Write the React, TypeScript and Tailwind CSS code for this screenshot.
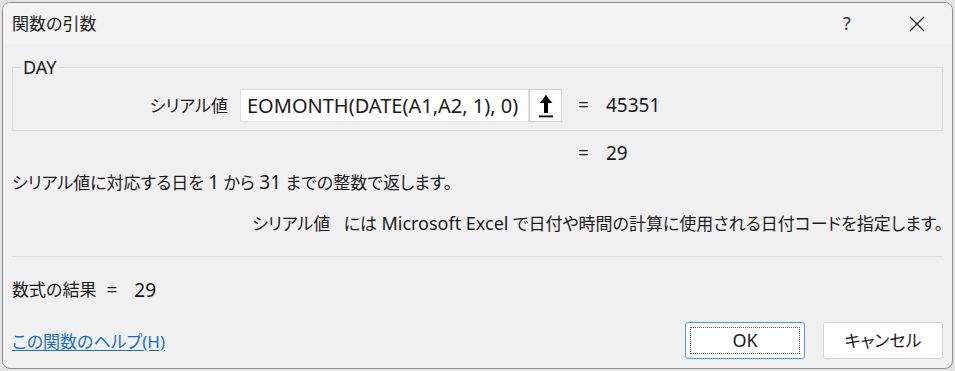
import React from 'react';

const font = "font-['Noto_Sans','Noto_Sans_CJK_JP',sans-serif] [font-feature-settings:'palt']";

function UploadArrow() {
  return (
    <svg width="16" height="24" viewBox="0 0 16 24" className="text-black">
      <path
        d="M8 0.5 Q10 4.5 14.5 9 L10 9 L10 19 L6 19 L6 9 L1.5 9 Q6 4.5 8 0.5 Z"
        fill="currentColor"
      />
      <rect x="1" y="21.5" width="14" height="1.8" fill="currentColor" />
    </svg>
  );
}

export default function App() {
  return (
    <div className={`w-[955px] h-[371px] bg-[#e4e4e4] p-[2px] ${font} text-[#1b1b1b]`}>
      <div className="w-[951px] h-[367px] rounded-[8px] border border-[#8e8e8e] bg-[#f0f0f0] overflow-hidden flex flex-col">
        {/* title bar */}
        <div className="h-[41px] bg-[#f3f3f3] flex items-center justify-between pl-[9px]">
          <span className="text-[17px] leading-[24px]">関数の引数</span>
          <div className="flex h-full">
            <div className="w-[70px] h-full flex items-center justify-center text-[18px] text-[#333]">?</div>
            <div className="w-[70px] h-full flex items-center justify-center">
              <svg width="16" height="16" viewBox="0 0 16 16">
                <path d="M1 1 L15 15 M15 1 L1 15" stroke="#1b1b1b" strokeWidth="1.3" />
              </svg>
            </div>
          </div>
        </div>

        {/* body */}
        <div className="flex flex-col px-[9px]">
          <fieldset className="mt-[13px] border border-[#dcdcdc] pb-[8px] pt-[12px]">
            <legend className="ml-[8px] px-[2px] text-[18px] leading-[20px]">DAY</legend>
            <div className="flex items-center">
              <span className="w-[215px] text-right text-[17px]">シリアル値</span>
              <div className="ml-[12px] flex h-[33px]">
                <div className="w-[289px] h-[33px] bg-white border border-[#e1e1e1] pl-[6px] flex items-center text-[20px] whitespace-pre">
                  EOMONTH(DATE(A1,A2, 1), 0)
                </div>
                <div className="w-[33px] h-[33px] bg-white border border-[#cfcfcf] flex items-center justify-center">
                  <UploadArrow />
                </div>
              </div>
              <span className="ml-[16px] w-[28px] text-[19px]">=</span>
              <span className="text-[19px]">45351</span>
            </div>
          </fieldset>

          <div className="mt-[10px] pl-[566px] flex text-[19px] leading-[24px]">
            <span className="w-[28px]">=</span>
            <span>29</span>
          </div>

          <p className="mt-[5px] text-[17px] leading-[24px] whitespace-pre">
            シリアル値に対応する日を <span className="text-[19px]">1</span> から <span className="text-[19px]">31</span> までの整数で返します。
          </p>

          <p className="mt-[16px] text-right text-[17px] leading-[24px] whitespace-pre">
            シリアル値   には <span className="text-[18px]">Microsoft Excel</span> で日付や時間の計算に使用される日付コードを指定します。
          </p>

          <div className="mt-[20px] h-px bg-[#dcdcdc]" />

          <div className="mt-[21px] flex items-center text-[17px] leading-[24px]">
            <span>数式の結果</span>
            <span className="ml-[10px] text-[19px]">=</span>
            <span className="ml-[17px] text-[19px]">29</span>
          </div>

          <div className="mt-[20px] flex items-center justify-between">
            <a href="#" className="text-[17px] leading-[24px] text-[#1a6fc9] underline underline-offset-[2px] mt-[3px]">
              この関数のヘルプ(H)
            </a>
            <div className="flex gap-[18px]">
              <button className="w-[120px] h-[37px] bg-white border border-[#4c9ae0] rounded-[3px] p-[4px]">
                <div className="w-full h-full border border-dotted border-[#555] flex items-center justify-center text-[18px]">
                  OK
                </div>
              </button>
              <button className="w-[120px] h-[37px] bg-white border border-[#d4d4d4] rounded-[3px] flex items-center justify-center text-[17px]">
                キャンセル
              </button>
            </div>
          </div>
        </div>
      </div>
    </div>
  );
}
